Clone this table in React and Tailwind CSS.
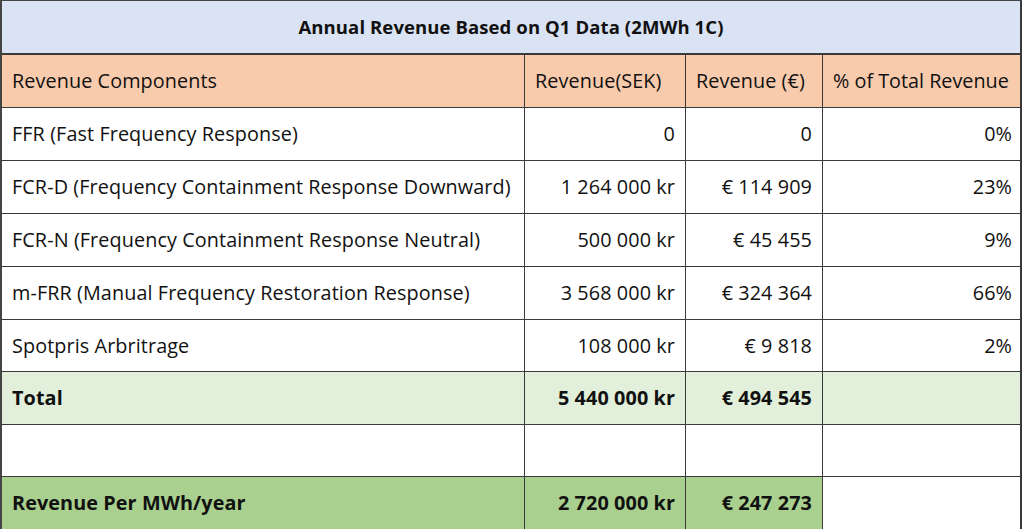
import React from "react";

const rows = [
  { name: "FFR (Fast Frequency Response)", sek: "0", eur: "0", pct: "0%", h: "h-[53px]" },
  { name: "FCR-D (Frequency Containment Response Downward)", sek: "1 264 000 kr", eur: "€ 114 909", pct: "23%", h: "h-[53px]" },
  { name: "FCR-N (Frequency Containment Response Neutral)", sek: "500 000 kr", eur: "€ 45 455", pct: "9%", h: "h-[53px]" },
  { name: "m-FRR (Manual Frequency Restoration Response)", sek: "3 568 000 kr", eur: "€ 324 364", pct: "66%", h: "h-[53px]" },
  { name: "Spotpris Arbritrage", sek: "108 000 kr", eur: "€ 9 818", pct: "2%", h: "h-[52px]" },
];

const cell = "border-r border-b border-[#3a3a3a] flex items-center px-[10px] whitespace-nowrap";

export default function App() {
  return (
    <div className="w-[1024px] h-[529px] bg-white overflow-hidden text-[#111]" style={{ fontFamily: '"Open Sans", "Noto Sans", sans-serif' }}>
      <div className="w-[1022px] border-l-2 border-t border-[#444] grid grid-cols-[523px_161px_137px_199px] text-[19.8px] tracking-[0.1px]">
        <div className="col-span-4 h-[54px] bg-[#dae3f3] border-r-2 border-b-2 border-[#3a3a3a] flex items-center justify-center font-bold text-[18.5px]">
          Annual Revenue Based on Q1 Data (2MWh 1C)
        </div>

        <div className={`${cell} h-[53px] bg-[#f8cbad]`}>Revenue Components</div>
        <div className={`${cell} h-[53px] bg-[#f8cbad]`}>Revenue(SEK)</div>
        <div className={`${cell} h-[53px] bg-[#f8cbad]`}>Revenue (€)</div>
        <div className={`${cell} h-[53px] bg-[#f8cbad] border-r-2 overflow-hidden tracking-normal`}>% of Total Revenue</div>

        {rows.map((r) => (
          <React.Fragment key={r.name}>
            <div className={`${cell} ${r.h}`}>{r.name}</div>
            <div className={`${cell} ${r.h} justify-end`}>{r.sek}</div>
            <div className={`${cell} ${r.h} justify-end`}>{r.eur}</div>
            <div className={`${cell} ${r.h} justify-end border-r-2 pr-[8px]`}>{r.pct}</div>
          </React.Fragment>
        ))}

        <div className={`${cell} h-[53px] bg-[#e2efda] font-bold`}>Total</div>
        <div className={`${cell} h-[53px] bg-[#e2efda] font-bold justify-end`}>5 440 000 kr</div>
        <div className={`${cell} h-[53px] bg-[#e2efda] font-bold justify-end`}>€ 494 545</div>
        <div className={`${cell} h-[53px] bg-[#e2efda] border-r-2`}></div>

        <div className={`${cell} h-[52px]`}></div>
        <div className={`${cell} h-[52px]`}></div>
        <div className={`${cell} h-[52px]`}></div>
        <div className={`${cell} h-[52px] border-r-2`}></div>

        <div className={`${cell} h-[53px] bg-[#a9d08e] font-bold`}>Revenue Per MWh/year</div>
        <div className={`${cell} h-[53px] bg-[#a9d08e] font-bold justify-end`}>2 720 000 kr</div>
        <div className={`${cell} h-[53px] bg-[#a9d08e] font-bold justify-end`}>€ 247 273</div>
        <div className={`${cell} h-[53px] border-r-2`}></div>
      </div>
    </div>
  );
}
